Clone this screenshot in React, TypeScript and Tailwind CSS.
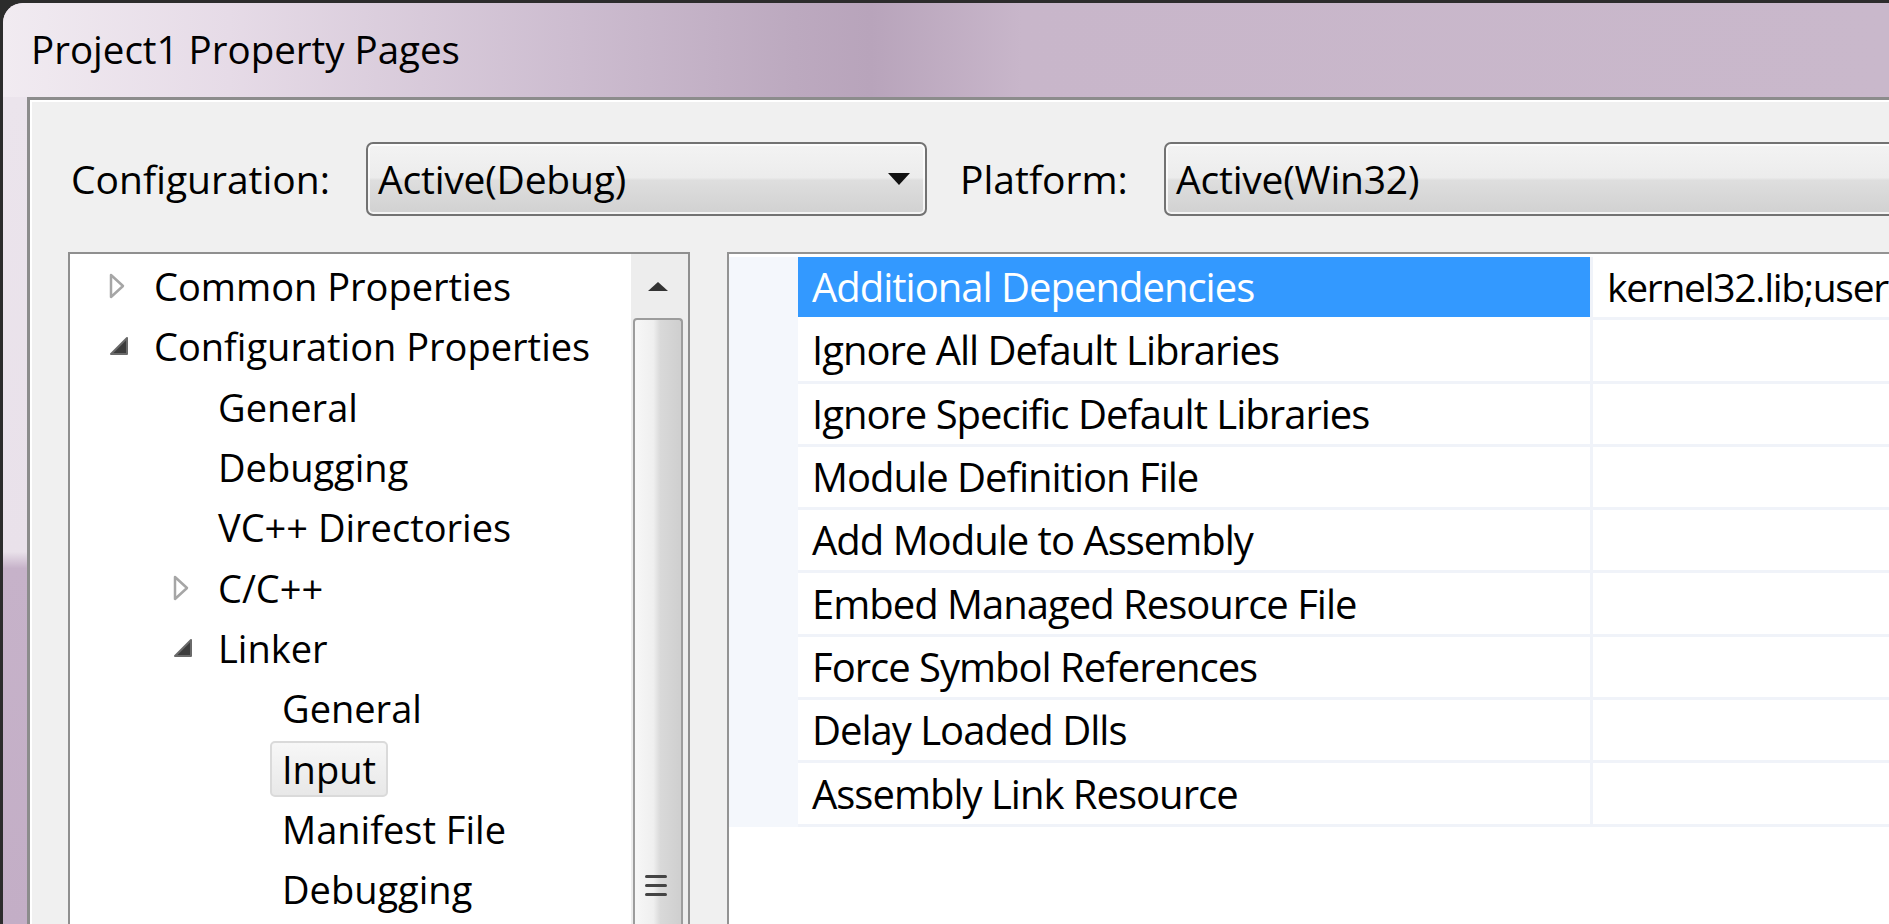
import { ReactNode } from 'react'

const FONT = "font-['Open_Sans','Noto_Sans',sans-serif]"

function Collapsed() {
  return (
    <svg width="18" height="28" viewBox="0 0 18 28" className="shrink-0">
      <path d="M3 3 L15 14 L3 25 Z" fill="none" stroke="#a6a6a6" strokeWidth="2.5" strokeLinejoin="round" />
    </svg>
  )
}

function Expanded() {
  return (
    <svg width="22" height="20" viewBox="0 0 22 20" className="shrink-0">
      <path d="M19 2 L19 18 L3 18 Z" fill="#3c3c3c" stroke="#6a6a6a" strokeWidth="2" strokeLinejoin="round" />
    </svg>
  )
}

function Combo({ text, arrow, className }: { text: string; arrow?: boolean; className: string }) {
  return (
    <div
      className={`h-[74px] flex items-center pl-[10px] pr-[14px] border-[2.5px] border-[#727272] rounded-[7px] bg-[linear-gradient(to_bottom,#f3f3f3_0%,#ececec_48%,#dedede_52%,#d1d1d1_100%)] shadow-[inset_0_0_0_2px_rgba(255,255,255,0.75)] ${className}`}
    >
      <span className="flex-1 text-[39px] text-black tracking-[-0.2px] whitespace-nowrap">{text}</span>
      {arrow && (
        <svg width="24" height="14" viewBox="0 0 24 14">
          <path d="M1 1 L23 1 L12 13 Z" fill="#111" />
        </svg>
      )}
    </div>
  )
}

type TreeItem = { label: string; level: number; icon?: 'open' | 'closed'; selected?: boolean }

const tree: TreeItem[] = [
  { label: 'Common Properties', level: 0, icon: 'closed' },
  { label: 'Configuration Properties', level: 0, icon: 'open' },
  { label: 'General', level: 1 },
  { label: 'Debugging', level: 1 },
  { label: 'VC++ Directories', level: 1 },
  { label: 'C/C++', level: 1, icon: 'closed' },
  { label: 'Linker', level: 1, icon: 'open' },
  { label: 'General', level: 2 },
  { label: 'Input', level: 2, selected: true },
  { label: 'Manifest File', level: 2 },
  { label: 'Debugging', level: 2 },
]

const props = [
  'Additional Dependencies',
  'Ignore All Default Libraries',
  'Ignore Specific Default Libraries',
  'Module Definition File',
  'Add Module to Assembly',
  'Embed Managed Resource File',
  'Force Symbol References',
  'Delay Loaded Dlls',
  'Assembly Link Resource',
]

function TreeRow({ item }: { item: TreeItem }) {
  const indent = ['pl-[84px]', 'pl-[148px]', 'pl-[212px]'][item.level]
  let icon: ReactNode = null
  if (item.icon === 'closed') icon = <Collapsed />
  if (item.icon === 'open') icon = <Expanded />
  return (
    <div className={`h-[60.3px] flex items-center relative ${indent}`}>
      {icon && (
        <div className="absolute top-0 bottom-0 flex items-center" style={{ left: 38 + item.level * 64 }}>
          {icon}
        </div>
      )}
      <span
        className={`text-[38px] text-black leading-none whitespace-nowrap ${
          item.selected
            ? '-ml-[12px] px-[10px] py-[7px] rounded-[5px] border-2 border-[#dadada] bg-[linear-gradient(to_bottom,#f7f7f7,#e8e8e8)]'
            : ''
        }`}
      >
        {item.label}
      </span>
    </div>
  )
}

export default function App() {
  return (
    <div className={`w-[1889px] h-[924px] overflow-hidden flex flex-col bg-[#2c2c2c] ${FONT}`}>
      <div className="flex-1 flex flex-col ml-[3px] mt-[3px] rounded-tl-[20px] overflow-hidden bg-[#d7c9d9]">
        {/* title bar */}
        <div className="h-[94px] shrink-0 flex items-center pl-[28px] bg-[linear-gradient(to_right,#f1ebf1_0%,#e6dbe7_12%,#cdbdd0_30%,#bca9bf_42%,#b8a4bb_46%,#c8b6ca_54%,#c9b8cb_100%)]">
          <span className="text-[38.5px] text-black">Project1 Property Pages</span>
        </div>
        <div className="flex-1 flex">
          {/* left frame */}
          <div className="w-[24px] shrink-0 bg-[linear-gradient(to_bottom,#ebe4ec_0%,#e9e1ea_55%,#c6b2c9_57%,#c3aec6_100%)]" />
          {/* client */}
          <div className="flex-1 flex flex-col bg-[#f0f0f0] border-l-[3px] border-t-[3px] border-[#8c8c8c] shadow-[inset_2px_2px_0_#ffffff]">
            <div className="flex items-center pt-[42px] pl-[41px]">
              <span className="text-[39px] text-black w-[295px] whitespace-nowrap">Configuration:</span>
              <Combo text="Active(Debug)" arrow className="w-[561px]" />
              <span className="text-[39px] text-black ml-[33px] w-[204px] whitespace-nowrap">Platform:</span>
              <Combo text="Active(Win32)" className="w-[800px] shrink-0" />
            </div>
            <div className="flex flex-1 pt-[36px] pl-[38px]">
              {/* tree */}
              <div className="w-[622px] shrink-0 bg-white border-2 border-[#8f8f8f] border-b-0 flex">
                <div className="flex-1 pt-[2px] overflow-hidden">
                  {tree.map((t, i) => (
                    <TreeRow key={i} item={t} />
                  ))}
                </div>
                <div className="w-[57px] bg-[#ededed] flex flex-col pl-[2px] pr-[5px]">
                  <div className="h-[64px] flex items-center justify-center">
                    <svg width="24" height="12" viewBox="0 0 24 12">
                      <path d="M2 11 L12 2 L22 11 Z" fill="#333" />
                    </svg>
                  </div>
                  <div className="flex-1 border-2 border-b-0 border-[#9c9c9c] rounded-t-[4px] bg-[linear-gradient(to_right,#f7f7f7_0%,#efefef_40%,#d9d9d9_55%,#cfcfcf_100%)] flex flex-col items-center justify-end pb-[28px]">
                    <div className="flex flex-col gap-[6px] pr-[4px]">
                      <div className="w-[22px] h-[3px] bg-[#444] rounded" />
                      <div className="w-[22px] h-[3px] bg-[#444] rounded" />
                      <div className="w-[22px] h-[3px] bg-[#444] rounded" />
                    </div>
                  </div>
                </div>
              </div>
              {/* property grid */}
              <div className="flex-1 ml-[37px] bg-white border-l-2 border-t-2 border-[#939393] pt-[3px] min-w-0">
                <div className="flex flex-col">
                  {props.map((p, i) => (
                    <div key={p} className="h-[63.3px] flex">
                      <div className="w-[69px] shrink-0 bg-[#f4f7fc]" />
                      <div
                        className={`w-[792px] shrink-0 flex items-center pl-[14px] border-b-[3px] border-[#f0f3f9] ${
                          i === 0 ? 'bg-[#3399ff] text-white border-b-white' : 'text-black'
                        }`}
                      >
                        <span className="text-[40px] tracking-[-1px] whitespace-nowrap">{p}</span>
                      </div>
                      <div className="flex-1 flex items-center pl-[14px] border-l-[3px] border-b-[3px] border-[#f0f3f9] whitespace-nowrap overflow-hidden">
                        {i === 0 && <span className="text-[39px] text-black tracking-[-1.3px]">kernel32.lib;user32.lib</span>}
                      </div>
                    </div>
                  ))}
                </div>
              </div>
            </div>
          </div>
        </div>
      </div>
    </div>
  )
}
